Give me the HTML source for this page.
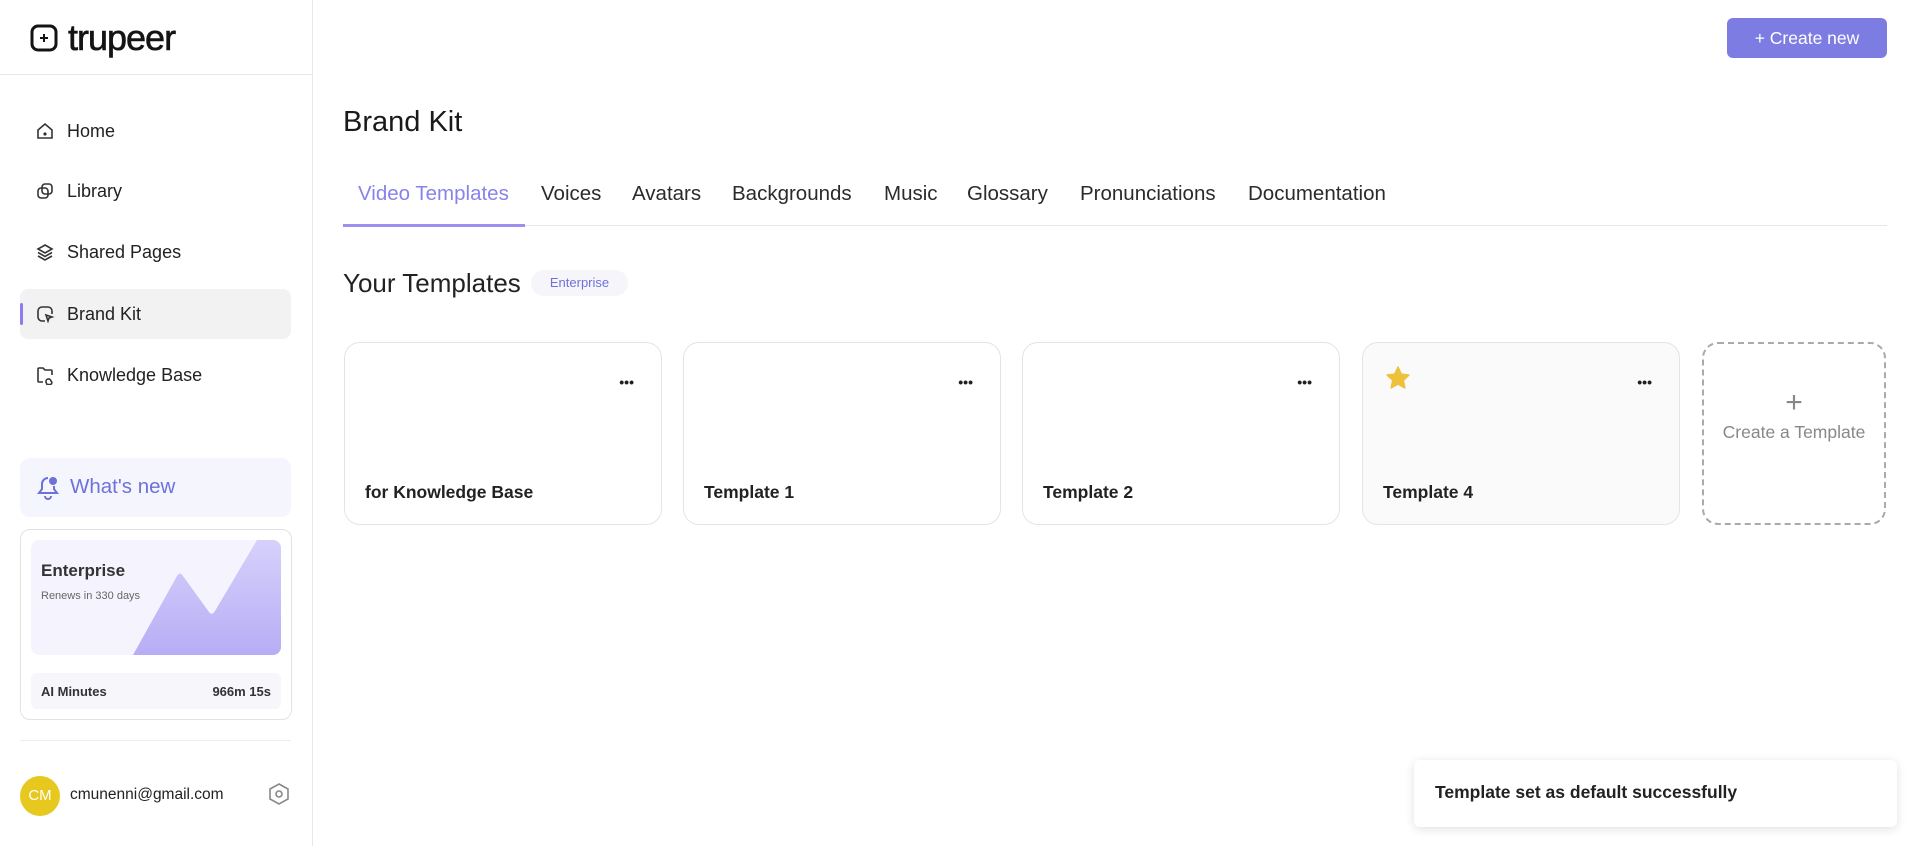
<!DOCTYPE html>
<html><head><meta charset="utf-8"><style>
*{box-sizing:border-box;margin:0;padding:0}
body{width:1920px;height:846px;overflow:hidden;background:#fff;font-family:"Liberation Sans",sans-serif;color:#1f2024;position:relative}
.side{position:absolute;left:0;top:0;width:313px;height:846px;border-right:1px solid #e8e8ea}
.logo{position:absolute;left:30px;top:17px;display:flex;align-items:center;font-size:36px;font-weight:500;letter-spacing:-1px;color:#141414;-webkit-text-stroke:0.6px #141414}
.hdr{position:absolute;left:0;top:74px;width:312px;border-top:1px solid #e6e6e8}
.nav{position:absolute;left:20px;width:271px;height:50px;display:flex;align-items:center;font-size:18px;color:#222}
.nav svg{position:absolute;left:15px}
.nav span{position:absolute;left:47px}
.act{background:#f2f2f3;border-radius:8px}
.act:before{content:"";position:absolute;left:0;top:14px;width:3px;height:22px;background:#8b7cf0;border-radius:2px}
.abs{position:absolute}
.tab{position:absolute;top:182px;font-size:20.5px;color:#2b2b2b}
.card{position:absolute;top:342px;width:318px;height:183px;border:1px solid #e4e4e6;border-radius:16px;background:#fff}
.card .t{position:absolute;left:20px;top:139px;font-size:17.5px;font-weight:700;color:#222}
.card .d{position:absolute;right:27px;top:31px;font-size:14px;font-weight:700;letter-spacing:0px}
</style></head><body>
<div class="side">
  <div class="logo"><svg width="28" height="28" viewBox="0 0 28 28" style="margin-right:10px"><rect x="2" y="2" width="24" height="24" rx="6" fill="none" stroke="#141414" stroke-width="3"/><path d="M14 10v8M10 14h8" stroke="#141414" stroke-width="2"/></svg>trupeer</div>
  <div class="hdr"></div>
  <div class="nav" style="top:106px"><svg width="20" height="20" viewBox="0 0 20 20" fill="none" stroke="#333" stroke-width="1.6"><path d="M3 9l7-6 7 6v8H3z"/><circle cx="10" cy="13" r=".8" fill="#333"/></svg><span>Home</span></div>
  <div class="nav" style="top:166px"><svg width="20" height="20" viewBox="0 0 20 20" fill="none" stroke="#333" stroke-width="1.6"><rect x="7" y="3" width="10" height="10" rx="3"/><rect x="3" y="7" width="10" height="10" rx="3"/></svg><span>Library</span></div>
  <div class="nav" style="top:227px"><svg width="20" height="20" viewBox="0 0 20 20" fill="none" stroke="#333" stroke-width="1.6"><path d="M10 3l7 4-7 4-7-4z M3 10.5l7 4 7-4 M3 14l7 4 7-4"/></svg><span>Shared Pages</span></div>
  <div class="nav act" style="top:289px"><svg width="20" height="20" viewBox="0 0 20 20" fill="none" stroke="#333" stroke-width="1.6"><path d="M10 17H7a4 4 0 01-4-4V7a4 4 0 014-4h6a4 4 0 014 4v3"/><path d="M11 11l6 2-3 1-1 3z"/></svg><span>Brand Kit</span></div>
  <div class="nav" style="top:350px"><svg width="20" height="20" viewBox="0 0 20 20" fill="none" stroke="#333" stroke-width="1.6"><path d="M8 17H4a1 1 0 01-1-1V4a1 1 0 011-1h4l2 2h6a1 1 0 011 1v4"/><path d="M11 17a2.5 2.5 0 015-1 2 2 0 01-.5 3.5H12z"/></svg><span>Knowledge Base</span></div>
  <div class="abs" style="left:20px;top:458px;width:271px;height:59px;background:#f5f5fd;border-radius:10px"><svg class="abs" style="left:16px;top:17px" width="24" height="26" viewBox="0 0 24 26" fill="none" stroke="#6e72d8" stroke-width="2"><path d="M12 3a6 6 0 00-6 6v5l-3 4h18l-3-4v-3"/><path d="M9 21a3 3 0 006 0"/><circle cx="17" cy="6" r="3" fill="#6e72d8"/></svg><span class="abs" style="left:50px;top:17px;font-size:20.5px;color:#6e72d8">What's new</span></div>
  <div class="abs" style="left:20px;top:529px;width:272px;height:191px;border:1px solid #e2e2e4;border-radius:10px">
    <div class="abs" style="left:10px;top:10px;width:250px;height:115px;background:#f5f4fe;border-radius:8px;overflow:hidden">
      <svg class="abs" style="left:0;top:0" width="250" height="115"><defs><linearGradient id="g" x1="0" y1="0" x2="0" y2="1"><stop offset="0" stop-color="#d6d1fb"/><stop offset="1" stop-color="#b7adf5"/></linearGradient></defs><path d="M102 115L146 36Q149 31 152 36L178 72Q181 76 184 71L226 0H250V115z" fill="url(#g)"/></svg>
      <div class="abs" style="left:10px;top:21px;font-size:17px;font-weight:700;color:#333">Enterprise</div>
      <div class="abs" style="left:10px;top:50px;font-size:11px;color:#666">Renews in 330 days</div>
    </div>
    <div class="abs" style="left:10px;top:143px;width:250px;height:36px;background:#f6f6fb;border-radius:6px;font-size:13px;font-weight:700;color:#333"><span class="abs" style="left:10px;top:11px">AI Minutes</span><span class="abs" style="right:10px;top:11px">966m 15s</span></div>
  </div>
  <div class="abs" style="left:20px;top:740px;width:271px;border-top:1px solid #eee"></div>
  <div class="abs" style="left:20px;top:776px;width:40px;height:40px;border-radius:50%;background:#e6c81e;color:#fff;font-size:15px;text-align:center;line-height:40px">CM</div>
  <div class="abs" style="left:70px;top:786px;font-size:15.5px;color:#222">cmunenni@gmail.com</div>
  <svg class="abs" style="left:267px;top:782px" width="24" height="24" viewBox="0 0 24 24" fill="none" stroke="#888" stroke-width="1.6"><path d="M12 2l9 5v10l-9 5-9-5V7z"/><circle cx="12" cy="12" r="3"/></svg>
</div>
<div class="abs" style="left:1727px;top:18px;width:160px;height:40px;background:#7c7ce2;border-radius:6px;color:#fff;font-size:17.5px;line-height:40px;text-align:center">+ Create new</div>
<div class="abs" style="left:343px;top:106px;font-size:29px;font-weight:500;color:#1a1a1a">Brand Kit</div>
<div class="tab" style="left:358px;color:#8a82ec">Video Templates</div>
<div class="tab" style="left:541px">Voices</div>
<div class="tab" style="left:632px">Avatars</div>
<div class="tab" style="left:732px">Backgrounds</div>
<div class="tab" style="left:884px">Music</div>
<div class="tab" style="left:967px">Glossary</div>
<div class="tab" style="left:1080px">Pronunciations</div>
<div class="tab" style="left:1248px">Documentation</div>
<div class="abs" style="left:343px;top:225px;width:1544px;border-top:1px solid #e6e6e8"></div>
<div class="abs" style="left:343px;top:224px;width:182px;height:3px;background:#9b90f0"></div>
<div class="abs" style="left:343px;top:268px;font-size:26px;color:#222">Your Templates</div>
<div class="abs" style="left:531px;top:270px;width:97px;height:26px;background:#f5f5fa;border-radius:13px;font-size:13px;color:#6e72d8;text-align:center;line-height:26px">Enterprise</div>
<div class="card" style="left:344px"><div class="d">•••</div><div class="t">for Knowledge Base</div></div>
<div class="card" style="left:683px"><div class="d">•••</div><div class="t">Template 1</div></div>
<div class="card" style="left:1022px"><div class="d">•••</div><div class="t">Template 2</div></div>
<div class="card" style="left:1362px;background:#fafafa"><svg class="abs" style="left:22px;top:22px" width="26" height="26" viewBox="0 0 24 24"><path d="M12 2l3 6.5 7 .8-5.2 4.8 1.5 7L12 17.6 5.7 21l1.5-7L2 9.3l7-.8z" fill="#eec13c" stroke="#eec13c" stroke-linejoin="round" stroke-width="1.5"/></svg><div class="d">•••</div><div class="t">Template 4</div></div>
<div class="abs" style="left:1702px;top:342px;width:184px;height:183px;border:2px dashed #aaa;border-radius:16px;text-align:center;color:#888"><div style="margin-top:42px;font-size:30px;font-weight:300">+</div><div style="font-size:17.5px;margin-top:2px">Create a Template</div></div>
<div class="abs" style="left:1414px;top:760px;width:483px;height:67px;background:#fff;border-radius:6px;box-shadow:0 2px 10px rgba(0,0,0,.12);font-size:17.5px;font-weight:700;color:#222;padding:22px 0 0 21px">Template set as default successfully</div>
</body></html>
